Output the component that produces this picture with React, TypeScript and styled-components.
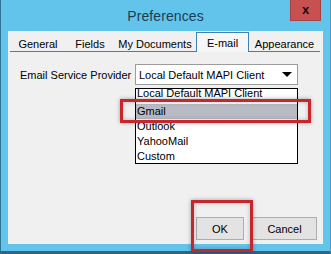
import styled, { createGlobalStyle } from "styled-components";

const GlobalStyle = createGlobalStyle`
  html, body {
    margin: 0;
    padding: 0;
    background: #63c4eb;
  }
  body {
    font-family: "Liberation Sans", Arial, sans-serif;
  }
`;

const Window = styled.div`
  position: relative;
  box-sizing: border-box;
  width: 331px;
  height: 254px;
  display: flex;
  flex-direction: column;
  background: #63c4eb;
  border-left: 1px solid #2f7396;
  border-right: 1px solid #4a9cc4;
  border-bottom: 3px solid #2c6788;
`;

const TitleBar = styled.div`
  height: 31px;
  flex: none;
  display: grid;
  grid-template-columns: 1fr auto 1fr;
  align-items: center;
`;

const Title = styled.div`
  grid-column: 2;
  font-size: 14px;
  color: #1c3c55;
  letter-spacing: 0.1px;
`;

const CloseButton = styled.div`
  grid-column: 3;
  justify-self: end;
  align-self: start;
  box-sizing: border-box;
  width: 31px;
  height: 21px;
  margin-right: 9px;
  background: #c75050;
  border: 1px solid #a84242;
  border-top: none;
  display: flex;
  align-items: center;
  justify-content: center;
  font-size: 13px;
  font-weight: bold;
  color: #111;
  line-height: 1;
  padding-bottom: 2px;
`;

const Client = styled.div`
  flex: 1;
  margin: 0 7px 7px 7px;
  background: #f0f0f0;
  display: flex;
  flex-direction: column;
`;

const TabStrip = styled.div`
  display: flex;
  align-items: flex-end;
  height: 19px;
  margin: 1px 3px 0 2px;
  border-bottom: 1px solid #3c82b4;
`;

const Tab = styled.div<{ $w: number; $active?: boolean }>`
  box-sizing: border-box;
  width: ${(p) => p.$w}px;
  text-align: center;
  font-size: 11px;
  color: #000;
  white-space: nowrap;
  ${(p) =>
    p.$active
      ? `
    height: 20px;
    margin-bottom: -1px;
    padding-top: 2px;
    line-height: 16px;
    background: #f6f6f6;
    border: 1px solid #3c82b4;
    border-bottom: none;
  `
      : `
    height: 14px;
    line-height: 14px;
  `}
`;

const FormRow = styled.div`
  display: flex;
  align-items: center;
  margin-top: 12px;
  padding-left: 12px;
`;

const Label = styled.div`
  width: 115px;
  font-size: 11px;
  color: #000;
`;

const ComboWrap = styled.div`
  position: relative;
  width: 163px;
  height: 21px;
`;

const Combo = styled.div`
  box-sizing: border-box;
  height: 100%;
  display: flex;
  align-items: center;
  justify-content: space-between;
  padding: 0 5px 0 3px;
  background: #fff;
  border: 1px solid #9c9c9c;
  font-size: 11px;
  color: #000;
`;

const DropList = styled.div`
  position: absolute;
  top: calc(100% + 3px);
  left: 0;
  box-sizing: border-box;
  width: 163px;
  height: 76px;
  overflow: hidden;
  background: #fff;
  border: 1px solid #000;
`;

const Item = styled.div<{ $selected?: boolean; $clipped?: boolean }>`
  height: 15px;
  line-height: ${(p) => (p.$clipped ? 9 : 15)}px;
  overflow: hidden;
  padding-left: 1px;
  font-size: 11px;
  color: #000;
  white-space: nowrap;
  background: ${(p) => (p.$selected ? "#b8bbc3" : "transparent")};
`;

const ButtonRow = styled.div`
  margin-top: auto;
  display: flex;
  justify-content: flex-end;
  gap: 8px;
  padding: 0 6px 4px 0;
`;

const Button = styled.div<{ $w: number }>`
  box-sizing: border-box;
  width: ${(p) => p.$w}px;
  height: 23px;
  display: flex;
  align-items: center;
  justify-content: center;
  background: #e3e3e3;
  border: 1px solid #adadad;
  font-size: 11px;
  color: #000;
`;

const Highlight = styled.div<{ $x: number; $y: number; $w: number; $h: number }>`
  position: absolute;
  left: ${(p) => p.$x}px;
  top: ${(p) => p.$y}px;
  width: ${(p) => p.$w}px;
  height: ${(p) => p.$h}px;
  box-sizing: border-box;
  border: 3px solid #c4272e;
  box-shadow: 0 0 4px rgba(0, 0, 0, 0.35), inset 0 0 4px rgba(0, 0, 0, 0.25);
  pointer-events: none;
`;

const tabs = [
  { label: "General", w: 56 },
  { label: "Fields", w: 48 },
  { label: "My Documents", w: 82 },
  { label: "E-mail", w: 53, active: true },
  { label: "Appearance", w: 71 },
];

const providers = ["Local Default MAPI Client", "Gmail", "Outlook", "YahooMail", "Custom"];

export default function App() {
  return (
    <>
      <GlobalStyle />
      <Window>
        <TitleBar>
          <Title>Preferences</Title>
          <CloseButton>x</CloseButton>
        </TitleBar>
        <Client>
          <TabStrip>
            {tabs.map((t) => (
              <Tab key={t.label} $w={t.w} $active={t.active}>
                {t.label}
              </Tab>
            ))}
          </TabStrip>
          <FormRow>
            <Label>Email Service Provider</Label>
            <ComboWrap>
              <Combo>
                <span>Local Default MAPI Client</span>
                <svg width="10" height="5" viewBox="0 0 10 5">
                  <path d="M0 0 H10 L5 5 Z" fill="#000" />
                </svg>
              </Combo>
              <DropList>
                {providers.map((p, i) => (
                  <Item key={p} $clipped={i === 0} $selected={p === "Gmail"}>
                    {p}
                  </Item>
                ))}
              </DropList>
            </ComboWrap>
          </FormRow>
          <ButtonRow>
            <Button $w={48}>OK</Button>
            <Button $w={65}>Cancel</Button>
          </ButtonRow>
        </Client>
        <Highlight $x={119} $y={99} $w={191} $h={24} />
        <Highlight $x={190} $y={200} $w={62} $h={52} />
      </Window>
    </>
  );
}
